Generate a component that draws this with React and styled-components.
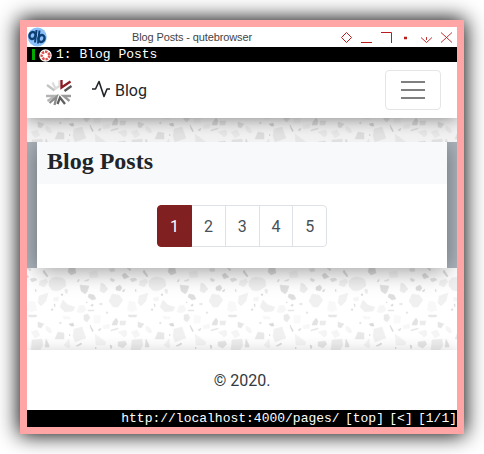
import React from "react";
import styled, { createGlobalStyle, css } from "styled-components";

const Global = createGlobalStyle`
  *, *::before, *::after { box-sizing: border-box; }
  html, body { margin: 0; background: #fff; overflow: hidden; }
  body { font-family: Roboto, sans-serif; font-size: 16px; color: #212529; }
`;

const Desktop = styled.div`
  width: 484px;
  height: 454px;
  padding: 20px;
  overflow: hidden;
`;

const Window = styled.div`
  display: flex;
  flex-direction: column;
  width: 444px;
  height: 414px;
  border: 7px solid #ffa5a5;
  box-shadow: 0 0 20px 1px #000;
`;

const TitleBar = styled.header`
  display: grid;
  grid-template-columns: 105px 1fr 120px;
  align-items: center;
  height: 20px;
  background: #fff;
`;

const AppIcon = styled.svg`
  display: block;
  width: 20px;
  height: 20px;
`;

const WindowTitle = styled.span`
  font: 11px/20px "Liberation Sans", Arial, sans-serif;
  letter-spacing: -0.12px;
  color: #444;
  white-space: nowrap;
`;

const WindowButtons = styled.svg`
  display: block;
  width: 120px;
  height: 20px;
  fill: none;
  stroke: #b81c1c;
`;

const consoleFont = css`
  font-family: "Liberation Mono", "Courier New", monospace;
  font-size: 13px;
  color: #fff;
  background: #000;
  white-space: pre;
`;

const TabBar = styled.div`
  ${consoleFont}
  display: flex;
  align-items: center;
  height: 15px;
  padding-left: 5px;
  line-height: 15px;
`;

const LoadMark = styled.i`
  width: 3px;
  height: 11px;
  margin-right: 4px;
  background: #0a0;
`;

const Favicon = styled.svg`
  width: 13px;
  height: 13px;
  margin: 1px 4px 0 0;
`;

const StatusBar = styled.footer`
  ${consoleFont}
  display: flex;
  justify-content: flex-end;
  gap: 5.3px;
  height: 17px;
  line-height: 17px;
`;

const Page = styled.div`
  position: relative;
  display: flex;
  flex-direction: column;
  height: 348px;
  overflow: hidden;
`;

const Terrazzo = styled.svg`
  position: absolute;
  inset: 0;
  width: 430px;
  height: 348px;
`;

const Navbar = styled.nav`
  position: relative;
  z-index: 2;
  display: flex;
  align-items: center;
  height: 56px;
  padding: 0 16px;
  background: #fff;
  box-shadow: 0 0 18px rgba(0, 0, 0, 0.5);
`;

const Spinner = styled.svg`
  width: 30px;
  height: 30px;
  margin-top: 6px;
`;

const Brand = styled.a`
  display: flex;
  align-items: center;
  gap: 4px;
  margin-left: 18px;
  padding-top: 2px;
  line-height: 24px;
`;

const Pulse = styled.svg`
  width: 20px;
  height: 20px;
  margin-top: -5px;
`;

const Toggler = styled.button`
  display: flex;
  flex-direction: column;
  align-items: center;
  justify-content: center;
  gap: 6px;
  width: 56px;
  height: 40px;
  margin-left: auto;
  padding: 0;
  border: 1px solid #e5e5e5;
  border-radius: 4px;
  background: transparent;
`;

const TogglerBar = styled.span`
  width: 24px;
  height: 2px;
  background: #808080;
`;

const Main = styled.main`
  position: relative;
  z-index: 1;
  display: flex;
  height: 126px;
  margin-top: 24px;
  padding: 0 10px;
  background: #adb5bd;
  clip-path: inset(0 0 -40px 0);
`;

const Card = styled.section`
  flex: 1;
  background: #fff;
  box-shadow: 0 2px 22px rgba(0, 0, 0, 0.42);
`;

const CardHeader = styled.h1`
  height: 42px;
  margin: 0;
  padding: 0 10px;
  background: #f8f9fa;
  font: bold 24px/39px "Liberation Serif", "Times New Roman", serif;
`;

const Pagination = styled.ul`
  display: flex;
  justify-content: center;
  margin: 21px 0 0;
  padding: 0;
  list-style: none;
`;

const PageItem = styled.li`
  width: ${(p) => (p.$active ? 35 : 34.75)}px;
  height: 42px;
  margin-left: ${(p) => (p.$active ? 0 : -1)}px;
  position: relative;
  z-index: ${(p) => (p.$active ? 1 : 0)};
  border: 1px solid ${(p) => (p.$active ? "#802020" : "#dee2e6")};
  background: ${(p) => (p.$active ? "#802020" : "#fff")};
  color: ${(p) => (p.$active ? "#fff" : "#495057")};
  line-height: 41px;
  text-align: center;
  &:first-child { border-radius: 4px 0 0 4px; }
  &:last-child { border-radius: 0 4px 4px 0; }
`;

const Footer = styled.div`
  position: relative;
  z-index: 1;
  height: 60px;
  margin-top: 82px;
  background: #fff;
  box-shadow: 0 0 14px rgba(0, 0, 0, 0.16);
  color: #343a40;
  line-height: 62px;
  text-align: center;
`;

const chips = [
  ["#cccccc", "42,0 48,0 49,5 44,7 41,4"],
  ["#d4d4d4", "3,11 8,10 10,12 5,14"],
  ["#c8c8c8", "17,2 21,8 20,9 16,4"],
  ["#eaeaea", "13,13 19,11 21,14 17,19 12,17"],
  ["#e9e9e9", "22,13 25,10 29,9 35,10 38,12 39,18 33,22 29,23 25,22 22,18"],
  ["#d2d2d2", "53,17 62,18 60,24 58,26 54,23"],
  ["#e4e4e4", "74,15 77,16 81,21 77,25 73,23"],
  ["#cdcdcd", "89,19 93,17 95,20 93,23 89,22"],
  ["#cfcfcf", "62,26 67,27 69,31 65,32 61,29"],
  ["#cccccc", "95,7 98,5 102,9 97,11"],
  ["#cccccc", "-5,7 -2,5 2,9 -3,11"],
  ["#eaeaea", "12,28 21,25 19,33 14,38 11,35"],
  ["#e9e9e9", "85,26 92,27 96,32 91,39 86,39 82,33"],
  ["#e9e9e9", "36,32 41,37 48,39 46,43 38,44 33,39"],
  ["#f5f5f5", "2,33 8,34 10,42 4,44 0,42"],
  ["#f2f2f2", "52,38 57,37 59,42 55,45 50,44"],
  ["#f6f6f6", "67,47 74,48 73,55 67,55"],
  ["#dedede", "57,47 61,46 63,50 60,54 57,52"],
  ["#d4d4d4", "86,54 89,50 91,53 90,57 85,57"],
  ["#e2e2e2", "93,53 99,53 98,57 93,57"],
  ["#f4f4f4", "36,48 43,49 43,51 37,51"],
  ["#dadada", "11,54 17,56 14,60 11,59"],
  ["#f0f0f0", "19,58 23,60 25,64 22,65 19,62"],
  ["#dddddd", "31,64 37,65 37,71 28,71"],
  ["#e9e9e9", "47,61 55,59 59,70 48,74 46,68"],
  ["#eeeeee", "68,66 79,74 78,77 69,77"],
  ["#e5e5e5", "5,72 15,71 16,77 13,82 4,82"],
  ["#d4d4d4", "19,71 22,77 22,79 18,79"],
  ["#ededed", "37,77 42,71 43,79 41,80"],
  ["#dadada", "91,74 98,73 100,76 96,80 91,78"],
  ["#efefef", "91,64 98,62 102,66 97,69"],
  ["#f0f0f0", "4,64 10,62 13,67 8,70"],
  ["#f3f3f3", "76,58 82,56 83,60 77,61"],
  ["#c6c6c6", "49,78 54,75 55,76 51,78"],
  ["#c6c6c6", "63,57 66,62 66,64 64,61"],
  ["#d2d2d2", "71,62 74,60 73,63"],
  ["#d8d8d8", "84,62 91,60 91,61 84,63"],
  ["#c4c4c4", "34,26 36,26 35,28"],
  ["#c8c8c8", "27,36 28,36 28,39"],
  ["#cccccc", "24,41 26,41 25,43"],
  ["#cccccc", "95,23 98,21 97,24"],
  ["#dadada", "1,47 10,47 9,49 2,49"],
  ["#dadada", "61,42 67,42 67,43 61,43"],
  ["#c4c4c4", "59,34 60,34 60,35"],
  ["#cccccc", "64,37 66,36 66,38 64,38"],
  ["#d8d8d8", "72,36 75,35 75,37"],
  ["#d4d4d4", "79,44 81,44 80,46"],
  ["#c7c7c7", "42,56 46,55 47,58 44,58"],
  ["#d4d4d4", "32,55 34,54 34,56"],
  ["#c0c0c0", "68,80 69,79 69,81"],
  ["#c2c2c2", "83,77 85,78 84,81"],
  ["#cccccc", "42,67 43,66 43,68"],
  ["#cccccc", "8,22 9,21 9,24"],
  ["#c8c8c8", "50,14 52,11 52,13"],
  ["#f1f1f1", "62,4 70,3 71,9 63,10"],
  ["#d9d9d9", "57,13 62,11 61,13"],
  ["#cfcfcf", "0,0 4,1 3,3"],
  ["#d4d4d4", "84,10 88,12 86,14 83,12"],
  ["#e4e4e4", "38,21 41,22 40,26 38,24"],
  ["#f0f0f0", "26,30 32,29 31,33 27,33"],
  ["#dddddd", "82,1 87,0 88,3 84,4"],
];

function TerrazzoBackdrop() {
  return (
    <Terrazzo>
      <defs>
        <pattern id="terrazzo" width="100" height="100" y="6" patternUnits="userSpaceOnUse">
          <g opacity="0.68">
            {chips.map(([fill, points]) => (
              <polygon key={points} fill={fill} points={points} stroke={fill} strokeWidth="0.5" strokeLinejoin="round" />
            ))}
          </g>
        </pattern>
      </defs>
      <rect width="430" height="348" fill="url(#terrazzo)" />
      <rect y="56" width="430" height="24" fill="#000" opacity="0.05" />
    </Terrazzo>
  );
}

const spokes = [
  ["#dcdcdc", "M9.500 4.500L12.500 10.500L16.500 8V2.500"],
  ["#c4c4c4", "M4 7L11.500 12.500"],
  ["#b4b4b4", "M3 18H12.500L4.500 23"],
  ["#8c8c8c", "M6.500 25L13.500 19L11.500 27"],
  ["#5f5f5f", "M14.500 26L17 19.500L22 26"],
  ["#9a9a9a", "M28 18H20.500L26.500 23"],
  ["#555555", "M28.500 8L21.500 13"],
  ["#8a1c24", "M18.500 2V9.500L27.500 3.500"],
];

export default function App() {
  return (
    <>
      <Global />
      <Desktop>
        <Window>
          <TitleBar>
            <AppIcon viewBox="0 0 20 20">
              <circle cx="10.3" cy="10" r="9.500" fill="#8cc0fa" />
              <g fill="none" stroke="#0d3f75" strokeWidth="2.400">
                <ellipse cx="5.500" cy="8.500" rx="3" ry="3.500" transform="rotate(20 5.500 8.500)" />
                <ellipse cx="14.500" cy="11.500" rx="3" ry="3.500" transform="rotate(20 14.500 11.500)" />
                <path d="M9.500 3L8 15.500M12.500 3.500L11 16.500" strokeWidth="2" />
              </g>
            </AppIcon>
            <WindowTitle>Blog Posts - qutebrowser</WindowTitle>
            <WindowButtons viewBox="0 0 120 20">
              <path d="M9.500 5.500l5 5-5 5-5-5z" strokeWidth="1" />
              <path d="M24 15.500h11M44 5.500h10.500V16" />
              <path d="M67 11h3" strokeWidth="2.500" />
              <path d="M84 10.500l5.500 5 5.500-5M89.500 10v3M104 5.500l11 10M115 5.500l-11 10" strokeWidth="0.900" />
            </WindowButtons>
          </TitleBar>
          <TabBar>
            <LoadMark />
            <Favicon viewBox="0 0 13 13">
              <circle cx="6.500" cy="6.500" r="6.200" fill="#fff" />
              <circle cx="6.500" cy="6.500" r="3.800" fill="none" stroke="#dc5050" strokeWidth="2.600" strokeDasharray="2.400 1" />
            </Favicon>
            1: Blog Posts
          </TabBar>
          <Page>
            <TerrazzoBackdrop />
            <Navbar>
              <Spinner viewBox="0 0 30 30">
                {spokes.map(([color, d]) => (
                  <path key={d} d={d} fill="none" stroke={color} strokeWidth="2.300" />
                ))}
              </Spinner>
              <Brand>
                <Pulse viewBox="0 0 20 20" fill="none" stroke="#212529" strokeWidth="1.600">
                  <path d="M1 10h3.500L8 2.500l5 15 3-7.500h3" strokeLinejoin="round" />
                </Pulse>
                Blog
              </Brand>
              <Toggler aria-label="Menu">
                <TogglerBar /><TogglerBar /><TogglerBar />
              </Toggler>
            </Navbar>
            <Main>
              <Card>
                <CardHeader>Blog Posts</CardHeader>
                <Pagination>
                  {[1, 2, 3, 4, 5].map((n) => (
                    <PageItem key={n} $active={n === 1}>{n}</PageItem>
                  ))}
                </Pagination>
              </Card>
            </Main>
            <Footer>© 2020.</Footer>
          </Page>
          <StatusBar>
            <span>http://localhost:4000/pages/</span>
            <span>[top]</span>
            <span>[&lt;]</span>
            <span>[1/1]</span>
          </StatusBar>
        </Window>
      </Desktop>
    </>
  );
}
